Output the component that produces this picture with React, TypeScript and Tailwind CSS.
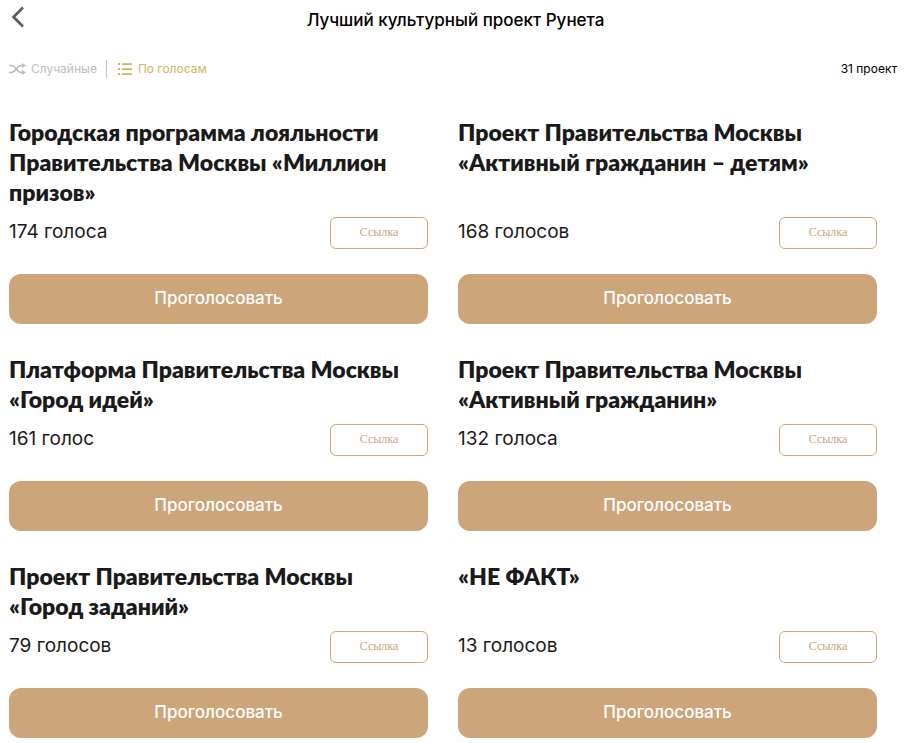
import { useState } from "react";

interface Project {
  title: string;
  votes: string;
}

const projects: Project[] = [
  { title: "Городская программа лояльности Правительства Москвы «Миллион призов»", votes: "174 голоса" },
  { title: "Проект Правительства Москвы «Активный гражданин – детям»", votes: "168 голосов" },
  { title: "Платформа Правительства Москвы «Город идей»", votes: "161 голос" },
  { title: "Проект Правительства Москвы «Активный гражданин»", votes: "132 голоса" },
  { title: "Проект Правительства Москвы «Город заданий»", votes: "79 голосов" },
  { title: "«НЕ ФАКТ»", votes: "13 голосов" },
];

function BackIcon() {
  return (
    <svg width="14" height="22" viewBox="0 0 14 22" fill="none" stroke="#5c5c5c" strokeWidth="2.6" aria-hidden="true">
      <path d="M12 1.500 2.500 11l9.500 9.500" />
    </svg>
  );
}

function ShuffleIcon() {
  return (
    <svg width="17" height="12" viewBox="0 0 17 12" fill="none" stroke="currentColor" strokeWidth="1.700" aria-hidden="true">
      <path d="M0 2.500h2.500C6.500 2.500 8 9.500 12 9.500h2" />
      <path d="M0 9.500h2.500C6.500 9.500 8 2.500 12 2.500h2" />
      <path d="M13 0 17 2.500 13 5zM13 7 17 9.500 13 12z" fill="currentColor" stroke="none" />
    </svg>
  );
}

function ListIcon() {
  return (
    <svg width="14" height="12" viewBox="0 0 14 12" fill="currentColor" aria-hidden="true">
      <path d="M0 0h2v2H0zM0 5h2v2H0zM0 10h2v2H0zM4 0.300h10v1.600H4zM4 5.300h10v1.600H4zM4 10.300h10v1.600H4z" />
    </svg>
  );
}

function ProjectCard({ project }: { project: Project }) {
  return (
    <article className="flex flex-col">
      <h2 className="mb-[10px] grow font-['Lato',sans-serif] text-[23px] leading-[30px] font-extrabold">{project.title}</h2>
      <div className="mb-[25px] flex items-start justify-between">
        <p className="text-[19px] leading-[30px]">{project.votes}</p>
        <a
          href="#"
          className="h-8 w-[98px] rounded-md border border-[#cda57a] text-center font-['Liberation_Serif',serif] text-[12px] leading-7 text-[#cda57a]"
        >
          Ссылка
        </a>
      </div>
      <button type="button" className="h-[50px] rounded-xl bg-[#cda57a] text-[17px] font-medium text-white">
        Проголосовать
      </button>
    </article>
  );
}

export default function App() {
  const [sort, setSort] = useState<"random" | "votes">("votes");

  return (
    <div className="min-h-screen bg-[#fefefe] pb-1 font-['Inter',sans-serif] text-[#1a1a1a]">
      <header className="grid grid-cols-[1fr_auto_1fr] items-start pt-[6px] pl-[11px]">
        <button type="button" aria-label="Назад" className="justify-self-start">
          <BackIcon />
        </button>
        <h1 className="pt-0.5 pr-[11px] text-[17px] leading-6 font-medium text-black">Лучший культурный проект Рунета</h1>
      </header>

      <div className="mt-7 flex items-center justify-between pr-[14px] pl-[9px] text-[12px] leading-[18px]">
        <div className="flex items-center">
          <button
            type="button"
            onClick={() => setSort("random")}
            className={`flex items-center gap-[5px] ${sort === "random" ? "text-[#d1b562]" : "text-[#bdbdbd]"}`}
          >
            <ShuffleIcon />
            Случайные
          </button>
          <span className="mr-[11px] ml-[9px] h-[18px] w-px bg-[#c4c4c4]" />
          <button
            type="button"
            onClick={() => setSort("votes")}
            className={`flex items-center gap-[6px] ${sort === "votes" ? "text-[#d1b562]" : "text-[#bdbdbd]"}`}
          >
            <ListIcon />
            По голосам
          </button>
        </div>
        <p className="text-black">31 проект</p>
      </div>

      <main className="mt-[39px] grid grid-cols-2 gap-x-[30px] gap-y-[30px] pr-[34px] pl-[9px]">
        {projects.map((project) => (
          <ProjectCard key={project.title} project={project} />
        ))}
      </main>
    </div>
  );
}
